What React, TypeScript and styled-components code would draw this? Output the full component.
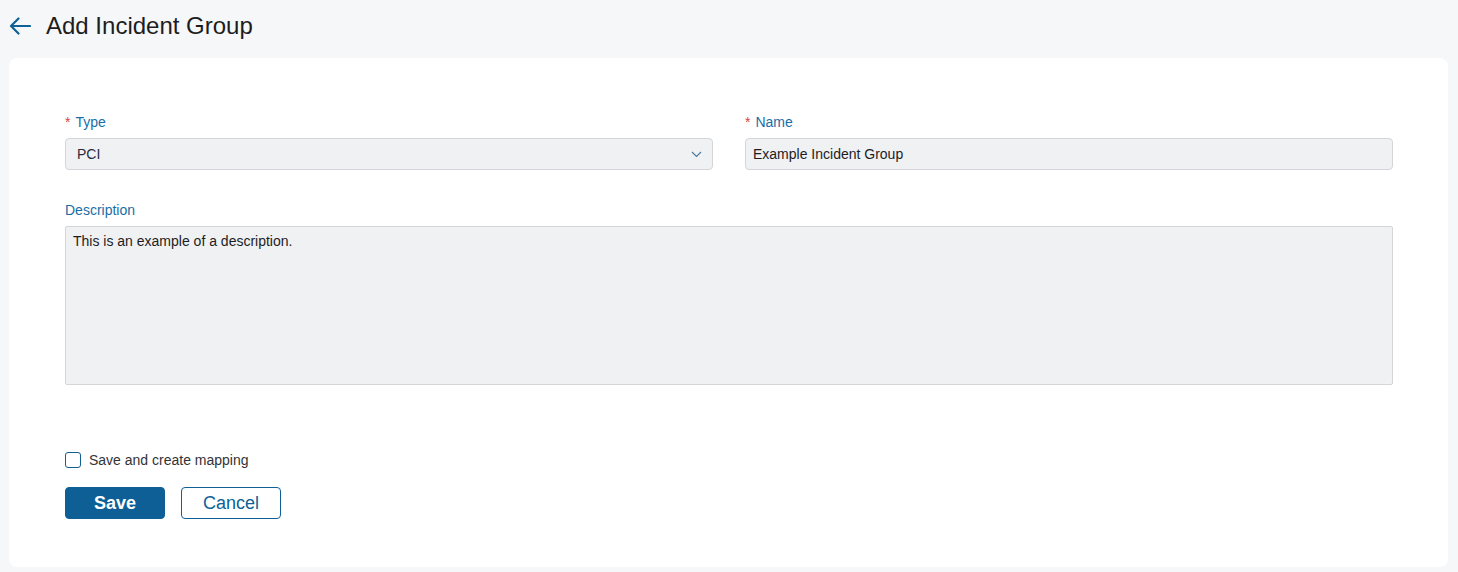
import React, { useState } from 'react'
import styled, { createGlobalStyle } from 'styled-components'

const GlobalStyle = createGlobalStyle`
  html, body {
    margin: 0;
    padding: 0;
    background: #f6f7f9;
    font-family: "Liberation Sans", Arial, sans-serif;
  }
`

const Page = styled.div`
  width: 1458px;
  min-height: 572px;
  background: #f6f7f9;
`

const Header = styled.header`
  display: flex;
  align-items: center;
  gap: 15px;
  height: 52px;
  padding: 0 0 0 9px;
  box-sizing: border-box;
`

const BackButton = styled.button`
  display: flex;
  align-items: center;
  justify-content: center;
  padding: 0;
  border: none;
  background: none;
  cursor: pointer;
  color: #0e6196;
`

const Title = styled.h1`
  margin: 0;
  font-size: 24px;
  font-weight: 400;
  color: #1d1d1f;
`

const Card = styled.main`
  margin: 6px 10px 0 9px;
  background: #ffffff;
  border-radius: 8px;
  padding: 54px 55px 48px 56px;
`

const Row = styled.div`
  display: grid;
  grid-template-columns: 1fr 1fr;
  column-gap: 32px;
`

const Field = styled.div<{ $top?: number }>`
  display: flex;
  flex-direction: column;
  margin-top: ${(p) => p.$top ?? 0}px;
`

const Label = styled.label`
  font-size: 14px;
  line-height: 20px;
  color: #1a6ea6;
  margin-bottom: 6px;
`

const Required = styled.span`
  color: #d8463c;
  margin-right: 5px;
`

const SelectBox = styled.div`
  height: 32px;
  box-sizing: border-box;
  border: 1px solid #d3d5d8;
  border-radius: 4px;
  background: #f0f1f3;
  display: flex;
  align-items: center;
  justify-content: space-between;
  padding: 0 10px 0 11px;
  font-size: 14px;
  color: #2a2a40;
  cursor: pointer;
`

const TextInput = styled.input`
  height: 32px;
  box-sizing: border-box;
  border: 1px solid #d3d5d8;
  border-radius: 4px;
  background: #f0f1f3;
  padding: 0 7px;
  font-family: inherit;
  font-size: 14px;
  color: #1d1d1f;
  outline: none;
`

const TextArea = styled.textarea`
  height: 159px;
  box-sizing: border-box;
  border: 1px solid #d3d5d8;
  border-radius: 2px;
  background: #f0f1f3;
  padding: 5px 7px;
  font-family: inherit;
  font-size: 14px;
  line-height: 18px;
  color: #1d1d1f;
  resize: none;
  outline: none;
`

const CheckRow = styled.label`
  display: flex;
  align-items: center;
  gap: 8px;
  margin-top: 67px;
  font-size: 14px;
  color: #333336;
  cursor: pointer;
`

const CheckBox = styled.span<{ $on: boolean }>`
  width: 16px;
  height: 16px;
  box-sizing: border-box;
  border: 1.5px solid #115f94;
  border-radius: 3px;
  background: ${(p) => (p.$on ? '#115f94' : '#fff')};
`

const Actions = styled.div`
  display: flex;
  gap: 16px;
  margin-top: 19px;
`

const Button = styled.button<{ $primary?: boolean }>`
  width: 100px;
  height: 32px;
  box-sizing: border-box;
  border-radius: 4px;
  border: 1px solid #0d5f96;
  background: ${(p) => (p.$primary ? '#0d5f96' : '#ffffff')};
  color: ${(p) => (p.$primary ? '#ffffff' : '#0d5f96')};
  font-family: inherit;
  font-size: 18px;
  font-weight: ${(p) => (p.$primary ? 600 : 400)};
  cursor: pointer;
`

export default function App() {
  const [checked, setChecked] = useState(false)

  return (
    <Page>
      <GlobalStyle />
      <Header>
        <BackButton aria-label="Back">
          <svg width="22" height="18" viewBox="0 0 22 18" fill="none">
            <path d="M21 9H2M9.5 1.5L2 9l7.5 7.5" stroke="currentColor" strokeWidth="2.2" strokeLinecap="round" strokeLinejoin="round" />
          </svg>
        </BackButton>
        <Title>Add Incident Group</Title>
      </Header>
      <Card>
        <Row>
          <Field>
            <Label>
              <Required>*</Required>Type
            </Label>
            <SelectBox>
              PCI
              <svg width="11" height="7" viewBox="0 0 11 7" fill="none">
                <path d="M1 1l4.5 4.5L10 1" stroke="#4a7aa0" strokeWidth="1.2" />
              </svg>
            </SelectBox>
          </Field>
          <Field>
            <Label>
              <Required>*</Required>Name
            </Label>
            <TextInput defaultValue="Example Incident Group" />
          </Field>
        </Row>
        <Field $top={30}>
          <Label>Description</Label>
          <TextArea defaultValue="This is an example of a description." />
        </Field>
        <CheckRow onClick={() => setChecked(!checked)}>
          <CheckBox $on={checked} />
          Save and create mapping
        </CheckRow>
        <Actions>
          <Button $primary>Save</Button>
          <Button>Cancel</Button>
        </Actions>
      </Card>
    </Page>
  )
}
